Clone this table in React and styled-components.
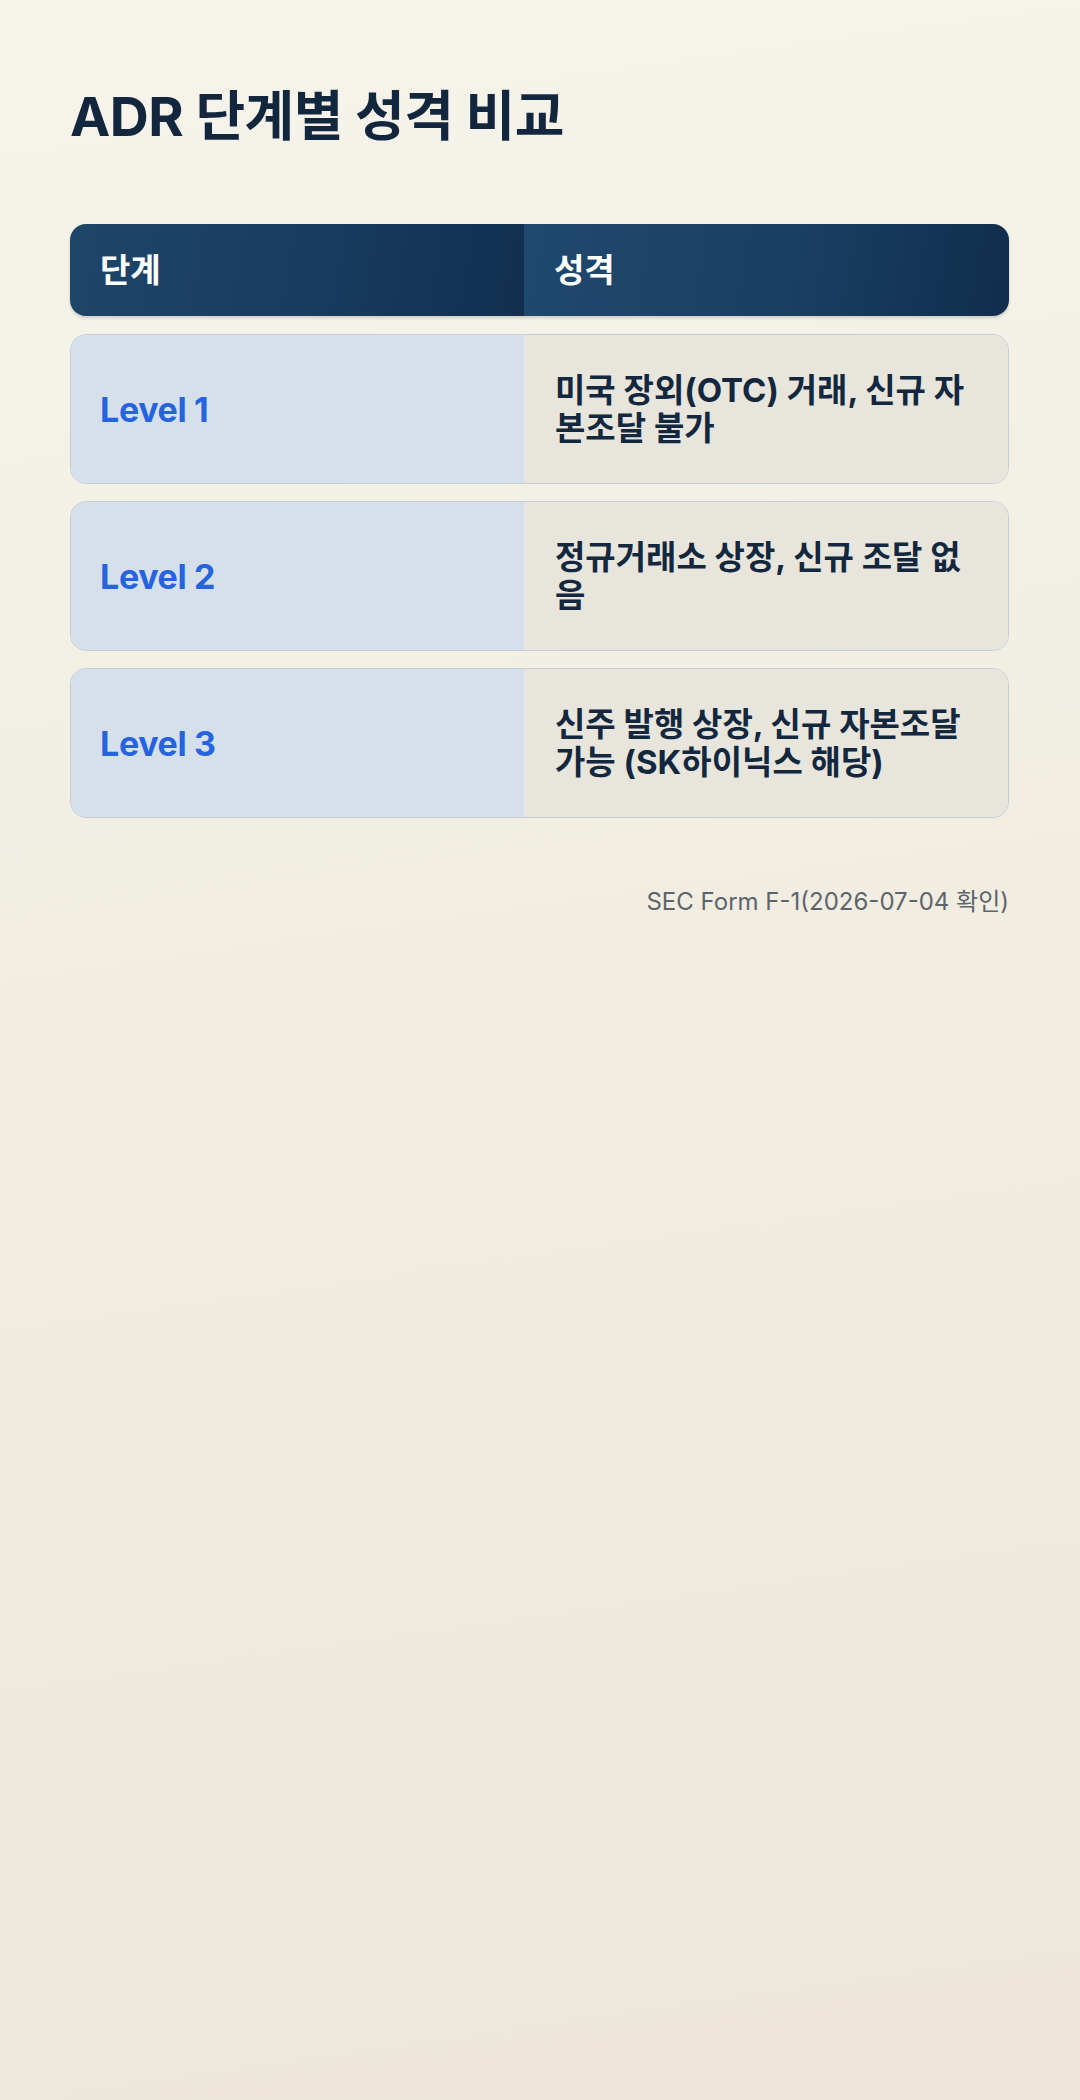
import React from 'react';
import styled, { createGlobalStyle } from 'styled-components';

const GlobalStyle = createGlobalStyle`
    html, body {
        margin: 0;
        padding: 0;
    }
    body {
        font-family: "Inter", "Noto Sans CJK KR", sans-serif;
        background: linear-gradient(172deg, #f6f4eb 0%, #f1ede1 45%, #eee7d9 100%);
        min-height: 2100px;
        color: #13283f;
    }
`;

const Page = styled.div`
    padding: 84px 71px 0 70px;
`;

const Title = styled.h1`
    margin: 0;
    font-size: 54px;
    line-height: 65px;
    font-weight: 700;
    letter-spacing: -0.01em;
    color: #12263d;
`;

const Table = styled.div`
    margin-top: 75px;
    display: flex;
    flex-direction: column;
    gap: 17px;
`;

const HeaderRow = styled.div`
    display: grid;
    grid-template-columns: 454px 1fr;
    border-radius: 16px;
    overflow: hidden;
    box-shadow: 0 2px 3px rgba(18, 40, 70, 0.18);
    margin-bottom: 1px;
`;

const HeadCell = styled.div`
    padding: 27px 30px;
    font-size: 33px;
    line-height: 38px;
    font-weight: 700;
    color: #ffffff;
    background: ${p => p.$first
        ? 'linear-gradient(100deg, #1e4669 0%, #183b5f 55%, #122f4f 100%)'
        : 'linear-gradient(100deg, #20496f 0%, #193f63 55%, #112d4c 100%)'};
`;

const Row = styled.div`
    display: grid;
    grid-template-columns: 453px 1fr;
    border: 1px solid #c3cdd8;
    border-radius: 16px;
    overflow: hidden;
    min-height: 148px;
`;

const LevelCell = styled.div`
    display: flex;
    align-items: center;
    padding: 0 30px 0 29px;
    background: #d5e0ea;
    font-size: 34px;
    font-weight: 700;
    letter-spacing: -0.01em;
    color: #2563df;
`;

const DescCell = styled.div`
    display: flex;
    align-items: center;
    padding: 0 31px 0 31px;
    background: #e8e6dc;
    font-size: 33px;
    line-height: 38px;
    font-weight: 700;
    color: #13283f;
`;

const Note = styled.p`
    margin: 66px 0 0;
    text-align: right;
    font-size: 24px;
    line-height: 35px;
    color: #5d646c;
`;

const rows = [
    { level: 'Level 1', desc: '미국 장외(OTC) 거래, 신규 자본조달 불가' },
    { level: 'Level 2', desc: '정규거래소 상장, 신규 조달 없음' },
    { level: 'Level 3', desc: '신주 발행 상장, 신규 자본조달 가능 (SK하이닉스 해당)' },
];

export default function App() {
    return (
        <Page>
            <GlobalStyle />
            <Title>ADR 단계별 성격 비교</Title>
            <Table>
                <HeaderRow>
                    <HeadCell $first>단계</HeadCell>
                    <HeadCell>성격</HeadCell>
                </HeaderRow>
                {rows.map(r => (
                    <Row key={r.level}>
                        <LevelCell>{r.level}</LevelCell>
                        <DescCell>{r.desc}</DescCell>
                    </Row>
                ))}
            </Table>
            <Note>SEC Form F-1(2026-07-04 확인)</Note>
        </Page>
    );
}
